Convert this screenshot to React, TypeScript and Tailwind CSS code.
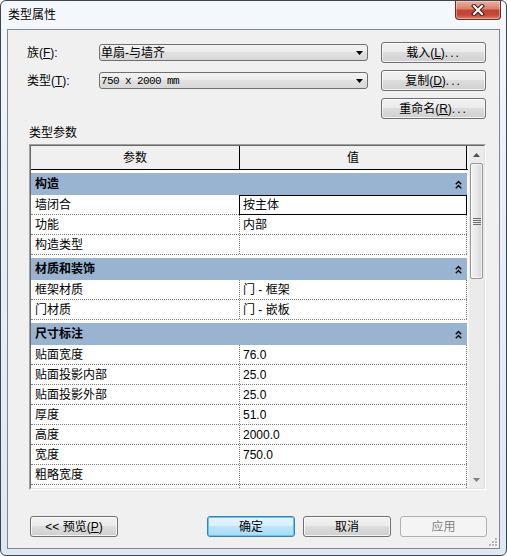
import React from 'react';

type Row = [string, string];

const groups: { name: string; rows: Row[] }[] = [
  { name: '构造', rows: [['墙闭合', '按主体'], ['功能', '内部'], ['构造类型', '']] },
  { name: '材质和装饰', rows: [['框架材质', '门 - 框架'], ['门材质', '门 - 嵌板']] },
  {
    name: '尺寸标注',
    rows: [
      ['贴面宽度', '76.0'],
      ['贴面投影内部', '25.0'],
      ['贴面投影外部', '25.0'],
      ['厚度', '51.0'],
      ['高度', '2000.0'],
      ['宽度', '750.0'],
      ['粗略宽度', ''],
      ['粗略高度', ''],
    ],
  },
];

// accelerator key, e.g. (F)
const Acc = ({ k }: { k: string }) => (
  <span>
    (<span className="underline">{k}</span>)
  </span>
);

const Button = ({
  children,
  className = '',
  kind = 'normal',
}: {
  children: React.ReactNode;
  className?: string;
  kind?: 'normal' | 'default' | 'disabled';
}) => {
  const look =
    kind === 'default'
      ? 'border-[#3c7fb1] bg-[linear-gradient(#e8f5fc_0%,#d8effb_45%,#bde5fb_50%,#a9daf6_100%)] shadow-[inset_0_0_0_1px_#5ccbf4] text-black'
      : kind === 'disabled'
        ? 'border-[#adb2b5] bg-[#f4f4f4] text-[#838383]'
        : 'border-[#707070] bg-[linear-gradient(#f2f2f2_0%,#ebebeb_45%,#dddddd_50%,#cfcfcf_100%)] shadow-[inset_0_0_0_1px_rgba(255,255,255,0.75)] text-black';
  return (
    <div className={`flex h-[21px] items-center justify-center rounded-[3px] border text-[12px] leading-[14px] ${look} ${className}`}>
      {children}
    </div>
  );
};

const Combo = ({ children }: { children: React.ReactNode }) => (
  <div className="flex h-[17px] w-[269px] items-center justify-between rounded-[3px] border border-[#707070] bg-[linear-gradient(#f3f3f3_0%,#ececec_45%,#e1e1e1_50%,#d8d8d8_100%)] pl-[1px] pr-[4px] text-[12px] leading-[14px] text-black">
    {children}
    <svg width="7" height="4" viewBox="0 0 7 4">
      <polygon points="0,0 7,0 3.5,4" fill="#000" />
    </svg>
  </div>
);

const Chevrons = () => (
  <svg width="7" height="9" viewBox="0 0 7 9">
    <polyline points="0.8,4.2 3.5,1.5 6.2,4.2" fill="none" stroke="#000" strokeWidth="1.4" />
    <polyline points="0.8,8.2 3.5,5.5 6.2,8.2" fill="none" stroke="#000" strokeWidth="1.4" />
  </svg>
);

const Scrollbar = () => (
  <div className="flex w-[16px] flex-col border-l border-[#f7f7f7] bg-[#ebebeb]">
    <div className="flex h-[17px] items-center justify-center">
      <svg width="7" height="4" viewBox="0 0 7 4">
        <polygon points="0,4 7,4 3.5,0" fill="#505050" />
      </svg>
    </div>
    <div className="flex-1 pl-[1px] pr-[1px]">
      <div className="flex h-[116px] items-center justify-center rounded-[2px] border border-[#979797] bg-[linear-gradient(90deg,#f4f4f4_0%,#e8e8e8_50%,#d6d6d6_100%)] shadow-[inset_0_0_0_1px_rgba(255,255,255,0.7)]">
        <svg width="8" height="7" viewBox="0 0 8 7">
          <rect x="0" y="0" width="8" height="1" fill="#6f6f6f" />
          <rect x="0" y="2" width="8" height="1" fill="#6f6f6f" />
          <rect x="0" y="4" width="8" height="1" fill="#6f6f6f" />
          <rect x="0" y="6" width="8" height="1" fill="#6f6f6f" />
        </svg>
      </div>
    </div>
    <div className="flex h-[17px] items-center justify-center">
      <svg width="7" height="4" viewBox="0 0 7 4">
        <polygon points="0,0 7,0 3.5,4" fill="#808080" />
      </svg>
    </div>
  </div>
);

const ParamTable = () => (
  <div className="ml-[21px] mt-[4px] h-[346px] w-[457px] border border-t-[#a0a0a0] border-l-[#a0a0a0] border-b-white border-r-white">
    <div className="flex h-full w-full border border-t-[#696969] border-l-[#696969] border-b-[#e3e3e3] border-r-[#e3e3e3]">
      <div className="flex w-[437px] flex-col overflow-hidden bg-white">
        {/* column headers */}
        <div className="flex h-[24px] shrink-0 border-b border-black bg-[#f0f0f0] text-[12px] leading-[14px]">
          <div className="flex w-[209px] items-center justify-center border-r border-black">参数</div>
          <div className="flex w-[227px] items-center justify-center border-r border-black">值</div>
        </div>
        {groups.map((g) => (
          <div key={g.name} className="shrink-0 pt-[3px]">
            <div className="flex h-[22px] w-[436px] items-center justify-between bg-[#99b4d1] pl-[4px] pr-[5px]">
              <span className="text-[12px] font-bold leading-[14px] text-black">{g.name}</span>
              <Chevrons />
            </div>
            {g.rows.map(([k, v], i) => (
              <div key={k} className="relative flex h-[20px] w-[436px] border-b border-dotted border-[#808080] text-[12px] leading-[14px] text-black">
                <div className="flex w-[209px] items-center border-r border-dotted border-[#808080] pl-[4px]">{k}</div>
                <div className="flex w-[227px] items-center border-r border-dotted border-[#808080] pl-[3px]">{v}</div>
                {g.name === '构造' && i === 0 && (
                  <div className="absolute left-[208px] top-0 h-[20px] w-[228px] border border-black" />
                )}
              </div>
            ))}
          </div>
        ))}
      </div>
      <Scrollbar />
    </div>
  </div>
);

export default function App() {
  return (
    <div className="h-[556px] w-[507px] bg-white font-['Liberation_Sans','Noto_Sans_CJK_SC',sans-serif]">
      <div className="flex h-full w-full flex-col rounded-[6px] border border-[#3d4650] bg-[linear-gradient(#f5f9fd_0%,#e9f0f8_30%,#dfe8f2_100%)]">
        {/* title bar */}
        <div className="flex h-[28px] shrink-0 items-start justify-between">
          <span className="pl-[7px] pt-[7px] text-[12px] leading-[14px] text-black">类型属性</span>
          <div className="mr-[5px] flex h-[19px] w-[46px] items-center justify-center rounded-b-[4px] border border-t-0 border-[#6b2b22] bg-[linear-gradient(#eab0a3_0%,#d98370_42%,#c2452f_52%,#c44a34_78%,#d9806a_100%)] shadow-[inset_0_0_0_1px_rgba(255,255,255,0.35)]">
            <svg width="14" height="12" viewBox="0 0 14 12">
              <path d="M3 2 L11 10 M11 2 L3 10" stroke="#3b2420" strokeWidth="4.2" strokeLinecap="square" />
              <path d="M3 2 L11 10 M11 2 L3 10" stroke="#ffffff" strokeWidth="2" strokeLinecap="square" />
            </svg>
          </div>
        </div>

        {/* client area */}
        <div className="relative mx-[6px] flex h-[520px] shrink-0 flex-col border border-[#7d8794] bg-[#f0f0f0] text-black">
          <div className="flex flex-col gap-[7px] pl-[19px] pt-[12px]">
            <div className="flex h-[21px] items-center">
              <div className="w-[72px] text-[12px] leading-[14px]">
                族<Acc k="F" />:
              </div>
              <Combo>
                <span>单扇-与墙齐</span>
              </Combo>
              <Button className="ml-[13px] w-[105px]">
                载入<Acc k="L" />
                <span className="tracking-[2px]">...</span>
              </Button>
            </div>
            <div className="flex h-[21px] items-center">
              <div className="w-[72px] text-[12px] leading-[14px]">
                类型<Acc k="T" />:
              </div>
              <Combo>
                <span className="font-['Liberation_Mono',monospace] text-[11px] tracking-[-0.6px]">750 x 2000 mm</span>
              </Combo>
              <Button className="ml-[13px] w-[105px]">
                复制<Acc k="D" />
                <span className="tracking-[2px]">...</span>
              </Button>
            </div>
            <div className="flex h-[21px] items-center">
              <Button className="ml-[354px] w-[105px]">
                重命名<Acc k="R" />
                <span className="tracking-[2px]">...</span>
              </Button>
            </div>
          </div>

          <div className="mt-[7px] h-[14px] pl-[21px] text-[12px] leading-[14px]">类型参数</div>

          <ParamTable />

          <div className="mt-[26px] flex pl-[22px]">
            <Button className="w-[88px]">
              &lt;&lt; 预览<Acc k="P" />
            </Button>
            <Button kind="default" className="ml-[89px] w-[88px]">确定</Button>
            <Button className="ml-[8px] w-[88px]">取消</Button>
            <Button kind="disabled" className="ml-[9px] w-[87px]">应用</Button>
          </div>

          {/* size grip */}
          <svg className="absolute bottom-[1px] right-[1px]" width="10" height="10" viewBox="0 0 10 10">
            {[
              [7, 1],
              [4, 4],
              [7, 4],
              [1, 7],
              [4, 7],
              [7, 7],
            ].map(([x, y]) => (
              <g key={`${x}-${y}`}>
                <rect x={x + 1} y={y + 1} width="2" height="2" fill="#ffffff" />
                <rect x={x} y={y} width="2" height="2" fill="#b5b5b5" />
              </g>
            ))}
          </svg>
        </div>
      </div>
    </div>
  );
}
